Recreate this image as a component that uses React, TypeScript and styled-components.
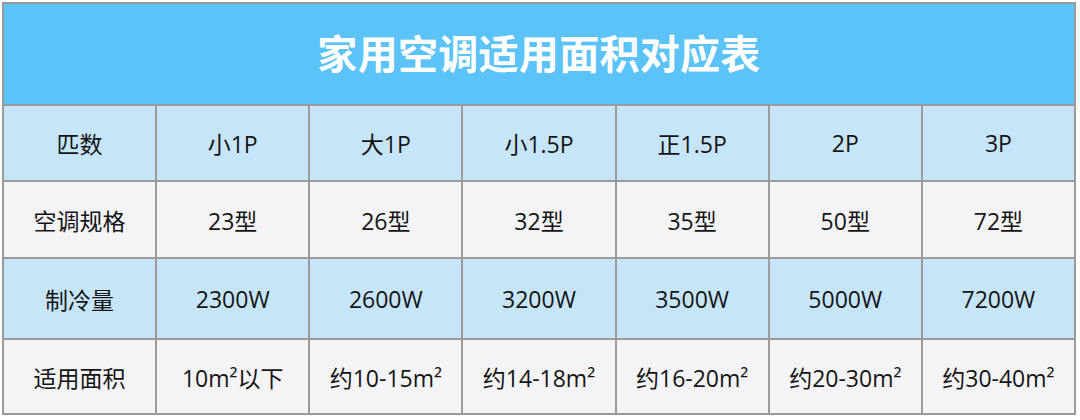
import React from "react";
import styled, { createGlobalStyle } from "styled-components";

const Global = createGlobalStyle`
  html, body { margin: 0; padding: 0; background: #ffffff; }
  body { font-family: "Open Sans", "Noto Sans CJK SC", sans-serif; }
`;

const Page = styled.div`
  padding: 2px 0 0 2px;
`;

const Table = styled.table`
  width: 1074px;
  border-collapse: collapse;
  table-layout: fixed;
  border: 2px solid #9a9a9a;
`;

const Title = styled.th`
  height: 95px;
  background: #5bc3f7;
  color: #ffffff;
  font-family: "Noto Sans CJK SC", sans-serif;
  font-weight: 700;
  font-size: 40px;
  line-height: 48px;
  letter-spacing: 0.3px;
  text-align: center;
  vertical-align: middle;
  border: 2px solid #9a9a9a;
  padding: 0 0 5px 0;
`;

const Row = styled.tr<{ $h: number }>`
  height: ${(p) => p.$h}px;
`;

const Cell = styled.td<{ $tone: "blue" | "gray" }>`
  background: ${(p) => (p.$tone === "blue" ? "#c6e5f9" : "#f4f4f6")};
  border: 2px solid #9a9a9a;
  color: #141414;
  font-family: "Open Sans", "Noto Sans CJK SC", sans-serif;
  font-size: 23px;
  text-align: center;
  vertical-align: middle;
  padding: 0;
  white-space: nowrap;
`;

const rows: { h: number; tone: "blue" | "gray"; cells: string[] }[] = [
  { h: 76, tone: "blue", cells: ["匹数", "小1P", "大1P", "小1.5P", "正1.5P", "2P", "3P"] },
  { h: 77, tone: "gray", cells: ["空调规格", "23型", "26型", "32型", "35型", "50型", "72型"] },
  { h: 81, tone: "blue", cells: ["制冷量", "2300W", "2600W", "3200W", "3500W", "5000W", "7200W"] },
  {
    h: 75,
    tone: "gray",
    cells: ["适用面积", "10m²以下", "约10-15m²", "约14-18m²", "约16-20m²", "约20-30m²", "约30-40m²"],
  },
];

export default function App() {
  return (
    <>
      <Global />
      <Page>
        <Table>
          <thead>
            <tr>
              <Title colSpan={7}>家用空调适用面积对应表</Title>
            </tr>
          </thead>
          <tbody>
            {rows.map((r, i) => (
              <Row key={i} $h={r.h}>
                {r.cells.map((c, j) => (
                  <Cell key={j} $tone={r.tone}>
                    {c}
                  </Cell>
                ))}
              </Row>
            ))}
          </tbody>
        </Table>
      </Page>
    </>
  );
}
